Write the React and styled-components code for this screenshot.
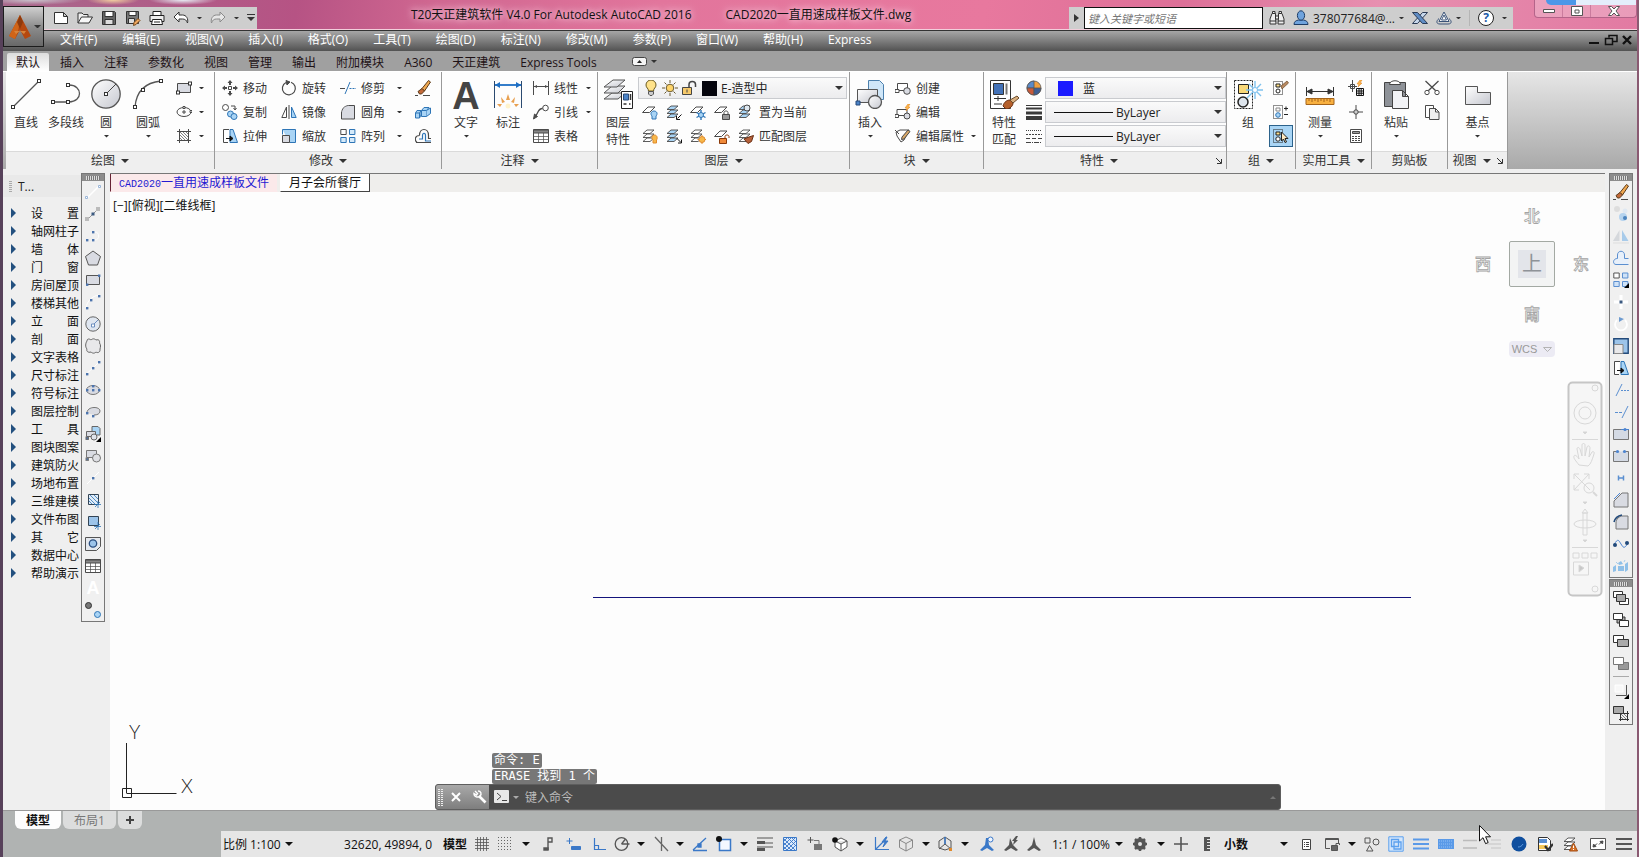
import styled, { createGlobalStyle } from 'styled-components';

const GlobalStyle = createGlobalStyle`
	* {
		box-sizing: border-box;
	}

	body {
		margin: 0;
		font-family: 'Open Sans', 'Noto Sans CJK SC', sans-serif;
		font-size: 12px;
		color: #222;
		background: #b0b3b2;
	}

	button,
	input,
	select {
		margin: 0;
		padding: 0;
		border: 0;
		background: none;
		font: inherit;
		color: inherit;
		appearance: none;
		outline: none;
	}

	button {
		white-space: nowrap;
	}
`;

const k = '#4a4a4a';
const b = '#2e75b6';
const lb = '#a9d4f5';
const g = '#d9dbe2';
const or = '#e08a2c';

const node = (x, y, s = 3) => (
	<rect key={`${x}-${y}`} x={x - s / 2} y={y - s / 2} width={s} height={s} fill="#fff" stroke="#333" />
);

const dot = (x, y) => (
	<rect key={`${x}-${y}`} x={x - 1} y={y - 1} width="2.4" height="2.4" fill="#4c74ad" />
);

const stack = (fill = '#fff') => (
	<g fill={fill} stroke={k} strokeWidth=".9">
		<path d="M1 13.5h7l4-3.5H5z" />
		<path d="M1 9.5h7L12 6H5z" />
		<path d="M1 5.5h7L12 2H5z" />
	</g>
);

const sheet = <path d="M.5 8.500h7L13 3H6z" fill="#fff" stroke={k} />;

// small icons are drawn on a 16 unit grid
const icons = {
	newFile: <path d="M1.500 2.500h9l4 4v7h-13zM10.500 2.500v4h4" fill="#fff" stroke="#333" />,
	open: (
		<g stroke="#333" strokeLinejoin="round">
			<path d="M1 13V3h4l1.500 1.500H11V7" fill="#eee" />
			<path d="M1 13l3.500-6H15.500l-3.500 6z" fill="#f7f7f7" />
		</g>
	),
	save: (
		<g stroke="#333">
			<path d="M1.500 1.500h12l1 1v12h-13z" fill="#666" />
			<path d="M4 1.500h8v5H4z" fill="#fff" />
			<path d="M4 9.500h8v5H4z" fill="#ddd" />
		</g>
	),
	saveAs: (
		<g stroke="#333">
			<path d="M1.500 1.500h12v12h-12z" fill="#777" />
			<path d="M4 1.500h7v4H4z" fill="#fff" />
			<path d="M3.500 8.500h6v5h-6z" fill="#ddd" />
			<path d="M8.500 15.500l.5-3 4-4 2 2-4 4z" fill="#f0a860" stroke="#7a4a1a" />
		</g>
	),
	print: (
		<g stroke="#222" fill="#fff">
			<path d="M4 5.500V1.500h8v4" />
			<path d="M1 5.500h14v6H1z" fill="#eee" />
			<path d="M3.500 9.500h9l1 5h-11z" />
			<path d="M5 12h6" />
		</g>
	),
	undo: <path d="M1 7l5-5v3h3.500c4 0 6 4 5 8-1-3-2.500-4-5-4H6v3z" fill="#fff" stroke="#333" />,
	redo: <path d="M15 7l-5-5v3H6.500c-4 0-6 4-5 8 1-3 2.500-4 5-4H10v3z" fill="#e6e6e6" stroke="#8a8a8a" />,
	binoculars: (
		<g stroke="#333" fill="#eee">
			<path d="M3 3.500h3.500v3L7 14H1V9zM13 3.500H9.500v3L9 14h6V9z" />
			<path d="M3.500 1.500h2.500v2H3.500zM10 1.500h2.500v2H10zM6.500 6h3v3h-3zM1 11h6M9 11h6" />
		</g>
	),
	user: (
		<g fill="#6fa3dd" stroke="#1d3c66">
			<path d="M1 14.500c0-3 2-4 4.500-4.500h5c2.500.5 4.500 1.500 4.500 4.500z" />
			<ellipse cx="8" cy="5.500" rx="3.600" ry="4.700" />
		</g>
	),
	exchange: (
		<g stroke="#2a3b55">
			<path d="M15.500 2.500h-5L.5 13.500h5z" fill="#c8d8ec" />
			<path d="M.5 2.500h5L15.500 13.500h-5z" fill="#5f8cc4" />
		</g>
	),
	a360: (
		<g fill="none" stroke="#3a5378">
			<path d="M8 2l5 9.500H3z" fill="#fff" />
			<path d="M8 5l2.500 5h-5z" />
			<path d="M3 8.500C0 11 0 14 4 14h8c4 0 4-3 1-5.500" />
		</g>
	),
	rect: (
		<g>
			<path d="M1.500 3.500h13v9h-13z" fill={g} stroke={k} />
			{node(14, 3.500)}
			{node(2, 12.500)}
		</g>
	),
	ellipse: (
		<g fill="none" stroke={k}>
			<ellipse cx="8" cy="8" rx="7" ry="4.500" />
			<path d="M8 6v4M6 8h4" />
			<path d="M14 6.500h2v2h-2zM7 2.500h2v2H7z" fill="#fff" />
		</g>
	),
	hatch: (
		<g stroke={k} fill="none">
			<path d="M3.500 1v14M12.500 1v14M1 3.500h14M1 12.500h14" />
			<path d="M4 10l2 2M4 7l5 5M4 4l8 8M7 4l5 5M10 4l2 2" strokeWidth=".7" />
		</g>
	),
	move: (
		<g fill={k}>
			<path d="M6.500 6.500h3v3h-3z" fill="#fff" stroke={k} />
			<path d="M8 0l2.500 3H9v2H7V3H5.500zM8 16l2.500-3H9v-2H7v2H5.500zM0 8l3-2.500V7h2v2H3v1.500zM16 8l-3-2.500V7h-2v2h2v1.500z" />
		</g>
	),
	rotate: (
		<g fill="none" stroke={k}>
			<path d="M5 2.500A6.500 6.500 0 1 0 10 2.200" strokeWidth="1.200" />
			<path d="M5 .5l4 1.500-3 3z" fill={k} />
		</g>
	),
	trim: (
		<g stroke={b} fill="none">
			<path d="M0 8.500h5" stroke={k} />
			<path d="M9.500 8.500H16" strokeDasharray="2 1" />
			<path d="M5 14L10 2" />
		</g>
	),
	eraser: (
		<g>
			<path d="M7 8.500L13.500.5l2 1.500-6 9z" fill="#f0a850" stroke="#5a3a1a" />
			<path d="M3 11.500l4-3 2.500 2.500-3 3H4.500z" fill="#c46a3a" stroke="#5a3a1a" />
			<path d="M0 15.500h3M8 15.500h7" stroke={k} />
		</g>
	),
	copy: (
		<g fill="#fff" stroke={k}>
			<circle cx="3.500" cy="3.500" r="3" />
			<path d="M9 2h4v3M11.500 4l1.500 2 1.500-2" fill="none" />
			<circle cx="8.500" cy="10" r="3" fill={lb} stroke={b} />
			<circle cx="12" cy="12.500" r="3" fill={lb} stroke={b} />
		</g>
	),
	mirror: (
		<g stroke={k}>
			<path d="M5.500 3v10.500H.8z" fill="#fff" />
			<path d="M8 1v14" />
			<path d="M10.500 3v10.500h4.700z" fill={lb} stroke={b} />
		</g>
	),
	fillet: (
		<g>
			<path d="M1.500 15V9c0-4 3-7.500 7-7.500h6V15z" fill={g} stroke={k} />
			<path d="M.5 8C1 4 4 1 8 .5" stroke="#fff" fill="none" />
		</g>
	),
	explode: (
		<g fill={lb} stroke={b}>
			<path d="M.5 9h4v5h-4zM.5 9L2 6.500h4L4.500 9M6 6.500V11L4.500 14" />
			<path d="M6.500 6.500h5v6h-5zM6.500 6.500L9 3.500h5l-2.500 3" />
			<path d="M11.500 6.500L15.500 4v5.500l-4 3" />
		</g>
	),
	stretch: (
		<g>
			<path d="M7 1.500H1.500v13H6" fill="#fff" stroke={k} />
			<path d="M8 1.500h3l4.500 13H8z" fill={lb} stroke={b} />
			<path d="M4 10.500h5M8 8l3 2.500L8 13z" stroke="#111" fill="#111" />
		</g>
	),
	scale: (
		<g>
			<path d="M1.500 1.500h13v13h-6" fill={lb} stroke={b} />
			<path d="M1.500 7.500h7v7h-7z" fill={g} stroke={k} />
			<path d="M1.500 1.500v5" stroke={b} />
		</g>
	),
	array: (
		<g fill="#fff" stroke={b}>
			<path d="M.8 1.500h5.400v5H.8z" stroke={k} />
			<path d="M9.500 1.500h5.400v5H9.500zM.8 9.500h5.400v5H.8zM9.500 9.500h5.400v5H9.500z" fill="#d5eafa" />
		</g>
	),
	offset: (
		<g fill="none" stroke={k} strokeWidth="1.200">
			<path d="M1 14.500h15M4.500 7.500C-.5 7.500-.5 12.500 2 14.500M4.500 7.500C4.500-.5 13.500-.5 13.500 7.500v3H16" />
			<path d="M4 11h3.500V7.500c0-3 3-3 3 0V13H16" stroke={b} />
		</g>
	),
	linear: (
		<g stroke={k} fill={k}>
			<path d="M.5 1v14M15.500 1v14M1 6.500h14" />
			<path d="M1 6.500l3-1.500v3zM15 6.500l-3-1.500v3z" stroke="none" />
		</g>
	),
	leader: (
		<g stroke={k} fill="none">
			<circle cx="12.500" cy="4" r="2.800" />
			<path d="M9.500 4.500c-5 0-4 5-7.500 8" strokeWidth="1.300" />
			<path d="M.5 15l1-5 3 2.500z" fill={k} />
		</g>
	),
	table: (
		<g stroke={k} fill="none">
			<path d="M.5 1.500h15v13H.5z" fill="#fff" />
			<path d="M.5 2h15v3H.5z" fill="#888" />
			<path d="M.5 8.500h15M.5 11.500h15M5.500 5v9.500M10.500 5v9.500" strokeWidth=".7" />
		</g>
	),
	bulb: (
		<g stroke="#6a5a20">
			<path d="M5.500 11C5.500 8 3 8 3 5a5 5 0 0 1 10 0c0 3-2.500 3-2.500 6z" fill="#ffe28a" />
			<path d="M5.500 11.500h5V14l-1.500 1.500H7L5.500 14z" fill="#ccc" stroke="#555" />
		</g>
	),
	sun: (
		<g stroke="#6a5a30">
			<path d="M8 0v3M8 13v3M0 8h3M13 8h3M2.500 2.500l2 2M11.500 11.500l2 2M2.500 13.500l2-2M11.500 4.500l2-2" />
			<circle cx="8" cy="8" r="3.800" fill="#ffd56a" />
		</g>
	),
	unlock: (
		<g stroke="#444">
			<path d="M1.500 7.500h9v7h-9z" fill="#f6c96a" />
			<path d="M8 7V4.500c0-4 6.500-4 6.500 0V7" fill="none" strokeWidth="1.500" />
			<path d="M6 9.500v3" />
		</g>
	),
	layOff: (
		<g>
			{sheet}
			<path d="M10 12C8 10 9 7 12 7s4 3 2 5v3h-4z" fill={lb} stroke={b} />
		</g>
	),
	layIso: (
		<g>
			{stack(lb)}
			<path d="M15.500 10.500L11.500 14.500M10.500 12v3.500H14" stroke="#111" fill="none" />
		</g>
	),
	layFreeze: (
		<g>
			{sheet}
			<path d="M11 6v10M6.500 8.500l9 5M6.500 13.500l9-5" stroke={b} strokeWidth="1.400" />
			<circle cx="11" cy="11" r="2.500" fill={lb} stroke={b} />
		</g>
	),
	layLock: (
		<g>
			{sheet}
			<path d="M8.500 10.500h7v5h-7z" fill="#999" stroke={k} />
			<path d="M10 10V8.500c0-2 4-2 4 0V10" fill="none" stroke={k} />
		</g>
	),
	layCurrent: (
		<g>
			{stack(lb)}
			<circle cx="9" cy="4" r="3" fill="#dfe8f0" stroke={k} />
		</g>
	),
	layOn: (
		<g>
			{stack()}
			<path d="M11 12C9 10 10 7 12.500 7S16 10 14.500 12v3H11z" fill="#f7b84a" stroke={or} />
		</g>
	),
	layUniso: (
		<g>
			{stack(lb)}
			<path d="M11 10.500l4 4M15.500 11.500V15H12" stroke="#111" fill="none" />
		</g>
	),
	layThaw: (
		<g>
			{stack()}
			<circle cx="12" cy="11.500" r="3" fill="#f7b84a" stroke={or} />
			<path d="M12 7v9M7.500 11.500H16" stroke={or} strokeDasharray="1.500 6" />
		</g>
	),
	layUnlock: (
		<g>
			{sheet}
			<path d="M5.500 10.500h7v5h-7z" fill="#f08a3a" stroke="#8a3a0a" />
			<path d="M11 10V8.500c0-2 4-2 4 0V10" fill="none" stroke="#8a3a0a" />
		</g>
	),
	layMatch: (
		<g>
			{stack()}
			<path d="M6 11l5-2 4.500-1.500-2 6-3.500 2z" fill="#b5603a" stroke="#6a2f12" />
		</g>
	),
	block: (
		<g stroke={k}>
			<path d="M2.500 3.500h10v7h-10z" fill="#fff" />
			<path d="M0 9.500h4v3H0z" fill="#fff" />
			<circle cx="12" cy="11" r="3.300" fill={g} />
		</g>
	),
	blockEdit: (
		<g stroke={k}>
			<path d="M2 5.500h10v6H2z" fill="#fff" />
			<path d="M0 10.500h3.500v3H0z" fill="#fff" />
			<circle cx="12" cy="12" r="3" fill={g} />
			<path d="M13 0l-3 4h2l-1 3 4-4h-2l2-3z" fill="#ffb84a" stroke={or} strokeWidth=".6" />
		</g>
	),
	attr: (
		<g stroke={k}>
			<path d="M1 4l4-2h9l-5 10-3 2-4-6z" fill="#fff" />
			<path d="M0 2l4 4" />
			<path d="M7 9l6-7 2 1.500-6 7.500-2.500.5z" fill="#d9a868" />
		</g>
	),
	wheel: (
		<g stroke="#555" strokeWidth=".8">
			<circle cx="8" cy="8" r="7" fill="#f0a040" />
			<path d="M8 8V1a7 7 0 0 0-7 7z" fill="#5a8ac8" />
			<path d="M8 8H1a7 7 0 0 0 7 7z" fill="#c85a3a" />
			<path d="M8 8h7a7 7 0 0 1-7 7z" fill="#3f5f94" />
		</g>
	),
	weights: (
		<g stroke="#3a3a3a">
			<path d="M0 1.500h16" />
			<path d="M0 4.500h16" strokeWidth="2" />
			<path d="M0 9h16" strokeWidth="3" />
			<path d="M0 14h16" strokeWidth="4" />
		</g>
	),
	dashes: (
		<g stroke="#444">
			<path d="M0 2.500h16" strokeDasharray="1 1" />
			<path d="M0 6.500h16" strokeDasharray="2 1" />
			<path d="M0 10.500h16" strokeDasharray="4 2" />
			<path d="M0 14.500h16" strokeDasharray="5 1 1 1" />
		</g>
	),
	ungroup: (
		<g fill="none" stroke="#222">
			<path d="M.5 1.500h9v13h-9z" strokeDasharray="1 1" />
			<path d="M3 4h4v3H3z" fill="#ffe08a" />
			<circle cx="5" cy="11" r="2" fill="#fff" />
			<path d="M8 6l6-5 1.500 2L9 9z" fill="#b98a62" stroke="#6a4a2a" strokeWidth=".7" />
		</g>
	),
	groupEdit: (
		<g fill="none" stroke="#222">
			<path d="M.5 1.500h9v13h-9z" strokeDasharray="1 1" />
			<path d="M3 4h4v3H3z" stroke="#888" />
			<circle cx="5" cy="11" r="2.300" fill={lb} stroke={b} />
			<path d="M11 4.500h4M13 2.500v4M11 10.500h4" />
		</g>
	),
	groupSelect: (
		<g fill="none" stroke="#222">
			<path d="M.5 1.500h9v13h-9z" strokeDasharray="1 1" />
			<path d="M3 4h4v3H3z" fill="#ffe08a" />
			<circle cx="5" cy="11" r="2.200" fill="#fff" />
			<path d="M8.500 4v9l2-2 1.500 3.500 1.500-.5-1.500-3.500H15z" fill="#ffe9c0" />
		</g>
	),
	quickCalc: (
		<g stroke={k} fill="none">
			<path d="M4.500 0v12M0 6.500h9M2.500 4.500h4v4h-4z" />
			<path d="M12 0l-3 4h2l-1 3 4-4h-2l2-3z" fill="#ffb84a" stroke={or} strokeWidth=".6" />
			<path d="M8.500 8.500h7v7h-7zM8.500 11h7M8.500 13.200h7M11 8.500v7M13.200 8.500v7" stroke="#111" />
		</g>
	),
	point: (
		<g stroke={k} fill="none">
			<path d="M8 1v14M1 8h14" />
			<circle cx="8" cy="8" r="2.200" fill="#ccc" />
		</g>
	),
	calc: (
		<g stroke={k} fill="none">
			<path d="M2.500 1.500h11v13h-11z" fill="#fff" />
			<path d="M4.500 3.500h7v2h-7z" fill="#999" />
			<path d="M4 8.500h8M4 10.500h8M4 12.500h8" strokeDasharray="2 1" />
		</g>
	),
	cut: (
		<g stroke={k} fill="#fff">
			<path d="M1.500 1L12 11M14.500 1L4 11" strokeWidth="1.300" />
			<circle cx="3" cy="12.500" r="2.200" />
			<circle cx="13" cy="12.500" r="2.200" />
		</g>
	),
	pages: (
		<g stroke={k} fill="#fff">
			<path d="M1.500 1.500h8v12h-8z" />
			<path d="M5.500 4.500h6l3.500 3.500v7.500H5.500zM11.500 4.500V8H15" fill="#eee" />
		</g>
	),

	// drawing toolbar
	tLine: (
		<g>
			<path d="M2 14L14 2" stroke="#fff" strokeWidth="1.500" />
			<path d="M.5 12.500h2v2h-2zM13.500 1.500h2v2h-2z" fill="#fff" stroke="#9bb6d8" />
		</g>
	),
	tXline: (
		<g>
			<path d="M1 15L15 1" stroke="#999" />
			<path d="M0 11h4v4H0zM11 1h4v4h-4z" fill="#bbb" />
			<path d="M6.500 6.500h3v3h-3z" fill="#3c5a80" />
		</g>
	),
	tPline: <g>{[dot(2, 12), dot(8, 12), dot(8, 4)]}<path d="M10 4c5 0 5 8 0 8" stroke="#fff" fill="none" /></g>,
	tPolygon: <path d="M8 1l7.500 5.500L12.500 15h-9L.5 6.500z" fill={g} stroke="#555" />,
	tRect: <g><path d="M1.500 3.500h13v9h-13z" fill={g} stroke="#555" />{[dot(14, 3.500), dot(2, 12.500)]}</g>,
	tArc: <g><path d="M1 14C2 7 7 2 14 1" stroke="#fff" fill="none" />{[dot(2, 14), dot(6, 6), dot(14, 2)]}</g>,
	tCircle: (
		<g stroke="#666">
			<circle cx="8" cy="8" r="7.200" fill="#dfe6f0" />
			<path d="M6.500 8h3v3h-3zM9 8l4-4" fill="#fff" stroke="#6d8fc0" />
		</g>
	),
	tCloud: <path d="M2 3c0-3 3-2 4-1 2-2 4-1 5 0 3-1 4 1 3.500 3 1.500 2 1 4 .5 6 .5 4-3 4-4 3-2 2-4 1-5 0-3 1-5-1-4-3C0 9 .5 5 2 3z" fill="#e8e8ea" stroke="#666" />,
	tSpline: <g><path d="M1 14C4 12 10 6 15 1" stroke="#fff" fill="none" />{[dot(2, 14), dot(8, 8), dot(14, 2)]}</g>,
	tEllipse: <g><ellipse cx="8" cy="8" rx="6.500" ry="4.500" fill={g} stroke="#777" />{[dot(8, 4), dot(2, 8), dot(14, 8), dot(8, 8)]}</g>,
	tEllArc: <g><path d="M2 9C2 2 15 2 15 7c0 3-3 4-6 4" fill={g} stroke="#777" />{[dot(2, 9), dot(8, 12)]}</g>,
	tInsert: (
		<g stroke="#666">
			<path d="M7 .5h6l2 2V9H7z" fill={lb} />
			<path d="M1.500 5.500h9v5h-9z" fill={g} />
			<circle cx="9" cy="11" r="3" fill="#dfe3ea" />
			<path d="M16 11v5h-5z" fill="#000" stroke="none" />
			{dot(2, 12)}
		</g>
	),
	tBlock: (
		<g stroke="#777">
			<path d="M1.500 2.500h10v7h-10z" fill={g} />
			<circle cx="11.500" cy="10" r="4" fill="#dfe0e4" />
			{dot(2, 11)}
		</g>
	),
	tPoint: <g><path d="M2 14L14 2" stroke="#fff" />{dot(8, 8)}</g>,
	tHatch: (
		<g stroke={b} fill="none">
			<path d="M3.500 2.500h10v10h-10z" fill="#e0ecf8" stroke="#345" />
			<path d="M4 6l6 6M4 9l3 3M5 3l8 8M9 3l4 4" strokeWidth=".8" />
			<path d="M13 9v7M9 12.500h7M10 15l5-5" strokeWidth=".8" />
		</g>
	),
	tGradient: (
		<g stroke={b} fill="none">
			<path d="M3.500 2.500h10v9h-10z" fill="#9cc4ea" stroke="#345" />
			<path d="M13 8v8M9 12.500h7M10 15l5-5" strokeWidth=".8" />
		</g>
	),
	tRegion: (
		<g stroke="#555">
			<path d="M.5 1.500h15v9l-4 4H.5z" fill="#e4e8ee" />
			<circle cx="8" cy="7.500" r="3.700" fill="#9cc4ea" stroke="#2c4f80" strokeWidth="1.300" />
		</g>
	),
	tDots: (
		<g stroke="#333">
			<circle cx="3.500" cy="3.500" r="3" fill="#777" />
			<circle cx="12.500" cy="12.500" r="3" fill={lb} stroke={b} />
		</g>
	),

	// modify toolbar
	rCopy: (
		<g>
			<circle cx="4" cy="3" r="3" fill="#ddd" />
			<circle cx="12" cy="5" r="2.500" fill="#dfe8f2" />
			<circle cx="10" cy="11" r="4" fill="#b5d3ee" />
			<circle cx="12" cy="12" r="2" fill="#4c84bd" />
		</g>
	),
	rMirror: <g><path d="M6.500 2v11H0z" fill="#d5d8dc" /><path d="M9 2v11h6.500z" fill="#a8cbea" /><path d="M0 15h16" stroke="#ddd" /></g>,
	rOffset: <path d="M15.500 14.500H3c-3.500 0-3.500-6 1.500-6V5c0-5 7-5 7 0v3.500h4" fill="#e8f0fa" stroke="#5b8fd0" />,
	rArray: (
		<g stroke="#5b8fd0" fill="#cfe2f7">
			<path d="M.8 1h5.400v5H.8z" fill="#fff" stroke="#555" />
			<path d="M9.500 1h5.400v5H9.500zM.8 9.500h5.400v5H.8zM9.500 9.500h5.400v5H9.500z" />
			<path d="M16 11v5h-5z" fill="#000" stroke="none" />
		</g>
	),
	rMove: <g><path d="M8 1v14M1 8h14" stroke="#fff" strokeWidth="3" /><path d="M6.500 6.500h3v3h-3z" fill="#3c5a80" /></g>,
	rRotate: <g><path d="M4 4a6 6 0 1 0 8 0" stroke="#fff" fill="none" strokeWidth="1.800" /><path d="M6 1l5 2-5 3z" fill="#6d9bd0" /></g>,
	rScale: <g><path d="M.8 .8h14.400v14.400H.8z" fill="#9cc4ea" stroke="#234a7a" strokeWidth="1.400" /><path d="M1 6.500h9v9H1z" fill="#e8e8ea" stroke="#888" /></g>,
	rTrim: <g stroke="#5b8fd0"><path d="M3 14L9 2" /><path d="M8 8.500h8" strokeDasharray="2 1" /></g>,
	rExtend: <g stroke="#5b8fd0"><path d="M9 14l6-12" /><path d="M2 8.500h8" strokeDasharray="3 1" /></g>,
	rBreakAt: <g><path d="M.5 3.500h15v10H.5z" fill="#d4dae4" stroke="#777" /><circle cx="12" cy="3.500" r="1.600" fill="#4c84d0" /><path d="M8 3.500h8" stroke="#4c84d0" /></g>,
	rBreak: <g><path d="M3 3.500H.5v10h15v-10H13" fill="#d4dae4" stroke="#777" /><circle cx="4.500" cy="3.500" r="1.600" fill="#4c84d0" /><circle cx="11.500" cy="3.500" r="1.600" fill="#4c84d0" /></g>,
	rJoin: <path d="M5.500 5.500v5M10.500 5.500v5M5 8h6" stroke="#5b8fd0" strokeWidth="1.500" />,
	rChamfer: <g><path d="M1 15V9l8-8h6v14z" fill={g} stroke="#777" /><path d="M1 7l6-6" stroke="#4c84d0" /></g>,
	rFillet: <g><path d="M3 15V9c0-4 3-7 7-7h5v13z" fill={g} stroke="#777" /><path d="M1 8c1-4 3-6 8-7" stroke="#234a7a" fill="none" strokeWidth="1.600" /></g>,
	rBlend: <g><path d="M1 9c4-8 5-4 7-1s3 6 7-1" fill="none" stroke="#4c84d0" /><circle cx="2" cy="9" r="2" fill="#234a7a" /><circle cx="14" cy="7" r="2" fill="#234a7a" /></g>,
	rExplode: <g fill="#8fc0e8"><path d="M0 9l3-2v6l-3 1zM5 5l3-2 2 3-4 1zM5 8h6v5H5zM12 6l3-2v8l-3 2z" /><path d="M3 4l2 2M12 2l-1 2" stroke="#a5cdec" /></g>,

	// draw order toolbar
	oFront: <g stroke="#333" fill="#fff"><path d="M.5 1.500h9v6h-9zM6.500 8.500h9v6h-9z" /><path d="M3.500 4.500h9v7h-9z" fill="#aaa" /></g>,
	oBack: <g stroke="#333" fill="#fff"><path d="M4 5h8v6H4z" fill="#aaa" /><path d="M.5 1.500h9v6h-9zM6.500 8.500h9v6h-9z" /></g>,
	oAbove: <g stroke="#333" fill="#fff"><path d="M.5 1.500h10v7H.5z" /><path d="M4.500 5.500h11v7h-11z" fill="#aaa" /></g>,
	oUnder: <g stroke="#777" fill="#fff"><path d="M5.500 6.500h10v7h-10z" fill="#999" /><path d="M.5 1.500h10v7H.5z" /></g>,
	oText: <g stroke="#555" fill="none"><path d="M13.500 2v10.500H3" /><path d="M2 2h8v7H2z" stroke="#fff" fill="#f8f8f8" /><path d="M16 11v5h-5z" fill="#000" stroke="none" /></g>,
	oHatch: <g stroke="#333" fill="#fff"><path d="M7.500 6v10M14.500 6v10M6 8.500h10M6 14.500h10" /><path d="M8 12l2 2M8 9l5 5M11 9l3 3" strokeWidth=".6" /><path d="M.5 1.500h10v7H.5z" fill="#aaa" /></g>,

	// status bar
	sGrid: <path d="M3.500 1v14M6.500 1v14M9.500 1v14M12.500 1v14M1 3.500h14M1 6.500h14M1 9.500h14M1 12.500h14" stroke="#555" strokeWidth=".8" />,
	sSnap: <path d="M1 1.500h14M1 4.500h14M1 7.500h14M1 10.500h14M1 13.500h14" stroke="#666" strokeDasharray="1 2" />,
	sInfer: <g stroke="#555" fill="none" strokeWidth="1.400"><path d="M8 14V2h4v4H8" /><path d="M4 12h4v2H4z" fill="#555" /></g>,
	sDyn: <g stroke="#3a78c8" fill="#3a78c8"><path d="M4.500 2v6M1.500 5h6" /><path d="M6.500 10.500h9v3h-9z" /></g>,
	sOrtho: <path d="M3.500 2v11.500H15M3.500 9.500h4v4" stroke="#3a78c8" fill="none" strokeWidth="1.200" />,
	sPolar: <g stroke="#555" fill="none" strokeWidth="1.300"><circle cx="7.500" cy="8" r="6.300" /><path d="M7.500 8h8M7.500 8l4-5" /></g>,
	sIso: <g stroke="#666"><path d="M2 1l13 14M8.500 1v14" strokeWidth="1.300" /></g>,
	sTrack: <g stroke="#3a78c8" fill="none" strokeWidth="1.300"><path d="M1 14.500h14M1 14L14 2" /><path d="M6 8h3v3H6z" fill="#3a78c8" /></g>,
	sOsnap: <g><path d="M3.500 3.500h11v11h-11z" fill="#f4f8ff" stroke="#3a78c8" strokeWidth="1.500" /><circle cx="3" cy="3" r="3" fill="#111" /></g>,
	sWeight: <g stroke="#555"><path d="M0 2h16M7 7h9M0 11h16" strokeWidth="1.200" /><path d="M0 6.500h8M0 13.500h8" strokeWidth="3" /></g>,
	sTransp: (
		<g>
			<path d="M1.500 1.500h13v13h-13z" fill="#dceafc" stroke="#3a78c8" />
			<path d="M2 5l3-3M2 9l7-7M2 13l11-11M5 14l9-9M9 14l5-5M2 11l3 3M2 7l7 7M2 3l11 11M6 2l8 8M10 2l4 4" stroke="#3a78c8" strokeWidth=".9" />
		</g>
	),
	sCycle: <g><path d="M3.500 1v6M.5 4h6" stroke="#555" /><path d="M7 4.500h5V8" fill="none" stroke="#777" /><path d="M7 8h8v6H7z" fill="#777" /></g>,
	sOsnap3: <g stroke="#555" fill="#fff"><path d="M9 2l6 3v6l-6 4-6-4V5zM3 5l6 3 6-3M9 8v7" /><circle cx="3" cy="4" r="2.800" fill="#111" stroke="none" /></g>,
	sUcs: <g stroke="#3a78c8" fill="none"><path d="M2.500 1v12.500H16M3 13L11 5" strokeWidth="1.200" /><path d="M13 1L9 6h3l-2 5 5-6h-3l2-4z" fill="#3a78c8" /></g>,
	sBox: <path d="M8 1l6.500 3v7.500L8 15l-6.500-3.500V4zM1.500 4L8 7.500 14.500 4M8 7.500V15" stroke="#888" fill="none" />,
	sGizmo: <g stroke="#555" fill="none"><path d="M8 1L2 5v7l6 2 6-2V5zM8 1v7l-6 5M8 8l6 5" /><path d="M12 12h3v3h-3z" fill={or} stroke="none" /><path d="M8 1v7" stroke="#3a78c8" strokeWidth="1.500" /></g>,
	sAnnoVis: <g fill="#3a78c8"><path d="M7 2h2l1 7 5 5-2 1-5-3-5 3-2-1 5-5z" /><circle cx="11.500" cy="3.500" r="2.500" fill="#eef5ff" stroke="#3a78c8" /></g>,
	sAnnoAuto: <g fill="#555"><path d="M7 2l3 7 5 5-2 1-5-3-5 3-2-1 5-5z" /><path d="M13 0L9 5h2l-1 4 5-5h-2l2-4z" /></g>,
	sAnno: <path d="M8 1l2 8 5 5-2 1-5-3-5 3-2-1 5-5z" fill="#555" />,
	sGear: (
		<g stroke="#555">
			<circle cx="8" cy="8" r="4" strokeWidth="4" />
			<path d="M8 1v2M8 13v2M1 8h2M13 8h2M3 3l1.500 1.500M11.500 11.500L13 13M3 13l1.500-1.500M11.500 4.500L13 3" strokeWidth="2.500" />
		</g>
	),
	sPlus: <path d="M8 1v14M1 8h14" stroke="#555" strokeWidth="1.600" />,
	sRuler: <g><path d="M5 1h6v14H5z" fill="#555" /><path d="M8 3.500h3M8 6.500h3M8 9.500h3M8 12.500h3" stroke="#e6e6e6" /></g>,
	sProps: <g stroke="#444" fill="none"><path d="M4.500 3.500h8v10h-8z" fill="#fff" /><path d="M6 6.500h1M8 6.500h3M6 8.500h1M8 8.500h3M6 10.500h1M8 10.500h3" /></g>,
	sLockUi: <g stroke="#555" fill="none"><path d="M6 12.500H1.500v-10h13V7M1.500 3.500h13" /><path d="M7.500 9.500h6v5h-6z" fill="#666" /><path d="M12 9V7.500h3.500V9" /></g>,
	sIsolate: <g stroke="#555" fill="none"><path d="M1 2h5v5H1zM5.500 9.500L9 15H2.500z" /><circle cx="12" cy="6" r="3" /></g>,
	sHardware: <g stroke="#5ba0ee" fill="#d4e6fb"><path d="M.8 .8h14.400v14.400H.8z" /><path d="M3.500 3.500h7v7h-7zM6 6h7v7H6z" strokeWidth="1.300" /></g>,
	sLines: <path d="M0 3.500h16M0 8h16M0 12.500h16" stroke="#5b9ae8" strokeWidth="1.800" />,
	sFill: <g><path d="M0 3h16v10H0z" fill="#5a9ae8" /><path d="M1 5h14M1 8h14M1 11h14" stroke="#93c0f5" strokeDasharray="1 1" /></g>,
	sGrayLines: <path d="M1 4.500h14M1 12h14" stroke="#bbb" strokeWidth="1.500" />,
	sGrayLines2: <path d="M5 4h10M1 8h14M5 12h10" stroke="#c4c4c4" strokeWidth="1.200" />,
	sBall: <g><circle cx="8" cy="8" r="7.500" fill="#0f4f9f" /><path d="M7 11c2 0 4-1 5-3" stroke="#5f9de0" fill="none" /></g>,
	sDwg: <g stroke="#333"><path d="M1.500 1.500h9l3 3v10h-12z" fill="#fff" /><path d="M2 3h8v4H2z" fill="#5b8fd0" stroke="none" /><path d="M2 9h9v4H2z" fill="#f7c95a" stroke="none" /><path d="M8 10l3 4 5-6" fill="none" strokeWidth="2.200" /></g>,
	sLayerWarn: <g>{stack()}<path d="M10.500 7l4 8h-8z" fill="#d8742a" stroke="#a34a10" /><path d="M10.500 9.500v2.500M10.500 13v1" stroke="#fff" /></g>,
	sClean: <g stroke="#555" fill="#fff"><path d="M.5 2.500h15v11H.5z" /><path d="M6 10.500l-3 .5.500-3zM10 5.500l3-.5-.5 3z" fill="#333" /><path d="M4 10.500l3-3M12 5.500l-3 3" stroke="#333" /></g>,
	sMenu: <path d="M0 3h16M0 8h16M0 13h16" stroke="#555" strokeWidth="1.800" />,
};

// large icons are drawn on a 30 unit grid
const bigIcons = {
	line: <g><path d="M3 27L27 3" stroke="#555" strokeWidth="1.300" />{[node(2, 28), node(28, 2)]}</g>,
	pline: <g><path d="M3 23h15c14 0 14-17 0-17" stroke="#555" fill="none" strokeWidth="1.300" />{[node(2, 23), node(17, 23), node(17, 6)]}</g>,
	circle: <g><circle cx="15" cy="15" r="14.200" fill="url(#shade)" stroke="#555" strokeWidth="1.300" /><path d="M15 15L25 5" stroke="#444" />{node(15, 15)}</g>,
	arc: <g><path d="M2 28C3 16 8 4 28 2" stroke="#555" fill="none" strokeWidth="1.300" />{[node(2, 28), node(10, 11), node(28, 2)]}</g>,
	dim: (
		<g>
			<path d="M1.500 2v27M28.500 2v27" stroke="#2b4a70" />
			<path d="M2 6h26" stroke="#1e6fc4" strokeWidth="1.800" />
			<path d="M2 6l5-3v6zM28 6l-5-3v6z" fill="#1e6fc4" />
			<path d="M15 15l2 6h-4zM8 18l4 5-3 1zM22 18l-4 5 3 1zM4 25l5 0-2 3zM26 25l-5 0 2 3z" fill="#e8a050" />
			<circle cx="15" cy="27" r="2.500" fill="#fff3cc" />
		</g>
	),
	layerProps: (
		<g>
			<g fill="url(#shade)" stroke="#555">
				<path d="M1 20h14l7-6H9z" />
				<path d="M1 14h14l7-7H9z" />
				<path d="M1 8h13l8-7H10z" />
			</g>
			<path d="M18.500 12.500h11v17h-11z" fill="#fff" stroke="#222" />
			<path d="M20.500 15h5v6h-5z" fill="#4c84c8" stroke="#2a4a78" />
			<path d="M20.500 25h3M26 25h1.500M27.500 15v6" stroke="#333" strokeWidth="1.500" />
		</g>
	),
	insert: (
		<g stroke="#555">
			<path d="M13.500 1.500h11l4 4v15h-15z" fill="#cfe6f8" stroke="#4c80ad" />
			<path d="M2.500 10.500h20v13h-20z" fill="url(#shade)" />
			<circle cx="20" cy="23" r="6.500" fill="url(#shade)" strokeWidth="1.300" />
			<path d="M1 22h4v4H1z" fill="#4c84c8" stroke="#24487a" />
		</g>
	),
	matchProps: (
		<g stroke="#333">
			<path d="M1.500 1.500h20v28h-20z" fill="#fff" />
			<path d="M4.500 4.500h10v11h-10z" fill="#4372b8" />
			<path d="M17.500 4.500v11" stroke="#777" strokeWidth="2" />
			<path d="M5 19.500h12M9 17v5M5 25h8" />
			<path d="M14 27c1-4 4-6 7-6l3 3c0 3-3 6-7 6z" fill="#b5602c" stroke="#6a2f12" />
			<path d="M21 21l7-4 2 2-6 5z" fill="#d9b080" stroke="#6a4a2a" />
		</g>
	),
	group: (
		<g fill="none" stroke="#222">
			<path d="M1.500 1.500h18v28h-18z" strokeDasharray="2 1" />
			<path d="M5.500 5.500h10v9h-10z" fill="#f8d878" />
			<circle cx="10" cy="23" r="5" fill="#dde4ec" strokeWidth="1.500" />
			<path d="M22 2v18M13 11h17M16 5l12 12M28 5L14 19" stroke="#7fc2ee" strokeWidth="1.400" />
			<circle cx="22" cy="11" r="2.500" fill="#fff" stroke="#7fc2ee" />
		</g>
	),
	measure: (
		<g stroke="#333">
			<path d="M1.500 8v9M28.500 8v9M2 12.500h26" />
			<path d="M2 12.500l5-2.500v5zM28 12.500l-5-2.500v5z" fill="#333" />
			<path d="M1 19.500h28v6H1z" fill="#f8b040" stroke="#a5641a" />
			<path d="M4 20v2M7 20v3M10 20v2M13 20v3M16 20v2M19 20v3M22 20v2M25 20v3" stroke="#a5641a" />
		</g>
	),
	paste: (
		<g stroke="#444">
			<path d="M3.500 3.500h21v24h-21z" fill="#8e9298" />
			<path d="M8.500 5.500c0-5 11-5 11 0z" fill="#fff" />
			<path d="M11.500 11.500h10l6 6v12h-16zM21.500 11.500v6h6" fill="#f2f3f6" />
		</g>
	),
	base: <path d="M2.500 7.500h12v6h13v12h-25z" fill="url(#shade)" stroke="#555" />,
};

const IconSvg = styled.svg`
	display: block;
	flex: none;
	width: ${props => props.$size}px;
	height: ${props => props.$size}px;
	fill: none;
`;

const Icon = ({ name }) => (
	<IconSvg $size={16} viewBox="0 0 16 16" aria-hidden="true">{icons[name]}</IconSvg>
);

const BigIcon = ({ name }) => (
	<IconSvg $size={30} viewBox="0 0 30 30" aria-hidden="true">{bigIcons[name]}</IconSvg>
);

const CaretSvg = styled.svg`
	display: block;
	flex: none;
	width: ${props => props.$size}px;
	height: ${props => props.$size / 2}px;
	fill: ${props => props.$color || '#333'};
`;

const Caret = ({ size = 6, color }) => (
	<CaretSvg $size={size} $color={color} viewBox="0 0 8 4" aria-hidden="true">
		<path d="M0 0h8L4 4z" />
	</CaretSvg>
);

const Window = styled.div`
	display: flex;
	flex-direction: column;
	min-height: 100vh;
	border-left: 3px solid #57415a;
	border-right: 2px solid #8a5a72;
	overflow: hidden;
	background: #b0b3b2;
`;

const Header = styled.header`
	display: grid;
	grid-template-columns: 41px 1fr;
	grid-template-rows: 30px 21px;
`;

const TitleBar = styled.div`
	grid-area: 1 / 1 / 2 / 3;
	display: flex;
	align-items: flex-end;
	padding-left: 41px;
	border-bottom: 1px solid #f3cfdc;
	background:
		radial-gradient(ellipse 50px 5px at 30px 0, #c9c3cc, transparent),
		radial-gradient(ellipse 26px 5px at 110px 0, #f2cfa0, transparent),
		radial-gradient(ellipse 34px 5px at 180px 0, #e8eef5, transparent),
		linear-gradient(100deg, #a8688c 0, #b65384 18%, #cf6690 26%, #e2759c 40%, #e8789e 60%, #dd7098 72%, #e790b0 84%, #e27aa2 100%);
`;

const AppButton = styled.button`
	grid-area: 1 / 1 / 3 / 2;
	z-index: 1;
	display: flex;
	align-items: center;
	justify-content: space-between;
	margin: 6px 0 4px;
	padding: 0 2px 0 4px;
	border: 1px solid #1c1c1c;
	background: linear-gradient(#cfcfcf, #8e8e8e 50%, #686868);
`;

const QuickBar = styled.div`
	display: flex;
	align-items: center;
	gap: 8px;
	width: 213px;
	height: 22px;
	padding-left: 9px;
	background: #cecece;
`;

const PlainButton = styled.button`
	display: flex;
	align-items: center;
	gap: 4px;
`;

const Title = styled.h1`
	display: flex;
	flex: 1;
	gap: 34px;
	margin: 0;
	padding-left: 154px;
	font-size: 12px;
	font-weight: 400;
	line-height: 28px;
	white-space: nowrap;
	color: #111;
	text-shadow: 0 0 6px #ffd8e6, 0 0 10px #ffc4d8;
`;

const InfoCenter = styled.div`
	display: flex;
	align-items: center;
	gap: 8px;
	width: 444px;
	height: 22px;
	padding-right: 6px;
	background: #cecece;
`;

const SearchToggle = styled.button`
	display: flex;
	justify-content: center;
	width: 15px;
	margin-right: -8px;
`;

const SearchInput = styled.input`
	width: 179px;
	height: 22px;
	margin-right: -2px;
	padding: 0 3px;
	border: 1px solid #111;
	background: #fff;
	font-size: 11px;
	font-style: italic;

	&::placeholder {
		color: #777;
	}
`;

const InfoDivider = styled.span`
	width: 1px;
	height: 16px;
	margin-left: auto;
	background: #b5b5b5;
`;

const HelpBadge = styled.span`
	width: 16px;
	height: 16px;
	border: 1px solid #222;
	border-radius: 50%;
	background: #fff;
	font-weight: 700;
	line-height: 14px;
	text-align: center;
	color: #2259a8;
`;

const WindowButtons = styled.div`
	position: relative;
	display: flex;
	align-self: flex-start;
	height: 18px;
	margin-left: 21px;
	border: 1px solid #b5648a;
	border-top: 0;
	border-radius: 0 0 4px 4px;
	background: rgba(255, 255, 255, .25);
`;

const WindowButton = styled.button`
	display: flex;
	align-items: center;
	justify-content: center;
	width: ${props => props.$wide ? 45 : 28}px;
	padding-top: 4px;
	border-right: 1px solid rgba(181, 100, 138, .6);

	&:last-of-type {
		border-right: 0;
	}
`;

const CaptureStrip = styled.span`
	position: absolute;
	top: 0;
	right: 0;
	width: 90px;
	height: 5px;
	border-left: 30px solid #4b97e8;
	border-bottom-left-radius: 5px;
	background: #e4eefb;
`;

const MenuBar = styled.nav`
	grid-area: 2 / 1 / 3 / 3;
	display: flex;
	align-items: center;
	gap: 25px;
	padding: 0 5px 2px 57px;
	border-top: 1px solid #333;
	background: linear-gradient(#a6a6a6, #7d7d7d 50%, #525252);
	line-height: 18px;
	white-space: nowrap;
	color: #fff;
`;

const DocButtons = styled.div`
	display: flex;
	gap: 4px;
	margin-left: auto;
`;

const TabBar = styled.div`
	display: flex;
	align-items: flex-end;
	height: 20px;
	padding-left: 4px;
	background: #a0a0a0;
`;

const RibbonTab = styled.button`
	height: 18px;
	padding: 0 ${props => props.$active ? 9 : 10}px;
	border-radius: 2px 2px 0 0;
	background: ${props => props.$active ? 'linear-gradient(#dcdcdc, #fff)' : 'none'};
	line-height: 19px;
	color: #1e1216;

	&:first-child {
		margin-right: 1px;
	}
`;

const MinimizeButton = styled(PlainButton)`
	align-self: center;
	gap: 4px;
	margin-left: 25px;
`;

const Ribbon = styled.div`
	display: flex;
	height: 98px;
	padding-left: 3px;
	border-top: 1px solid #fff;
	background: linear-gradient(#e6e6e6, #a9a9a9);
`;

const Panel = styled.section`
	display: flex;
	flex-direction: column;
	flex: none;
	width: ${props => props.$width}px;
	border-right: 1px solid #999;
	background: #fdfdfd;
`;

const PanelBody = styled.div`
	display: flex;
	height: 79px;
`;

const PanelTitle = styled.button`
	display: flex;
	align-items: center;
	justify-content: center;
	gap: 6px;
	position: relative;
	height: 18px;
	padding-right: ${props => props.$launcher ? 12 : 0}px;
	border-top: 1px solid #dadada;
	background: #efefef;
	line-height: 17px;
	color: #333;
`;

const Launcher = styled.svg`
	position: absolute;
	right: 4px;
	bottom: 5px;
	width: 6px;
	height: 6px;
	fill: none;
	stroke: #333;
`;

const BigButtonRoot = styled.button`
	display: flex;
	flex-direction: column;
	align-items: center;
	flex: none;
	width: ${props => props.$width}px;
	padding-top: 7px;
`;

const BigLabel = styled.span`
	margin: 5px 0 4px;
	line-height: 17px;
	white-space: pre;
	color: #333;
`;

const BigA = styled.span`
	height: 30px;
	font-family: 'Liberation Sans', sans-serif;
	font-size: 38px;
	font-weight: 700;
	line-height: 34px;
	color: #444;
`;

const BigButton = ({ icon, label, width = 40, caret }) => (
	<BigButtonRoot $width={width}>
		{icon === 'text' ? <BigA>A</BigA> : <BigIcon name={icon} />}
		<BigLabel>{label}</BigLabel>
		{caret && <Caret size={5} />}
	</BigButtonRoot>
);

const Column = styled.div`
	display: grid;
	grid-template-rows: repeat(3, 24px);
	align-content: start;
	align-items: center;
	flex: none;
	width: ${props => props.$width}px;
	margin-left: ${props => props.$gap || 0}px;
	padding-top: 4px;
`;

const SmallButtonRoot = styled.button`
	display: flex;
	align-items: center;
	gap: 5px;
	color: #333;

	${CaretSvg} {
		margin-left: auto;
	}
`;

const SmallButton = ({ icon, label, caret }) => (
	<SmallButtonRoot aria-label={label || icon}>
		<Icon name={icon} />
		{label}
		{caret && <Caret size={5} />}
	</SmallButtonRoot>
);

const ToolButton = styled.button`
	display: flex;
	align-items: center;
	justify-content: center;
	width: 24px;
	height: 22px;
	border: ${props => props.$active ? '1px solid #2c628b' : '0'};
	background: ${props => props.$active ? '#a9d5f5' : 'none'};
`;

const LayerGrid = styled.div`
	display: grid;
	grid-template-rows: repeat(3, 24px);
	align-content: start;
	align-items: center;
	width: 209px;
	padding-top: 4px;
`;

const LayerRow = styled.div`
	display: flex;
	align-items: center;

	${SmallButtonRoot} {
		margin-left: 4px;
	}
`;

const PropertyGrid = styled.div`
	display: grid;
	grid-template: repeat(3, 24px) / 19px 181px;
	align-items: center;
	align-content: start;
	padding: 4px 0 0 2px;
	width: 202px;
`;

const Combo = styled.label`
	display: flex;
	align-items: center;
	gap: 3px;
	height: 22px;
	padding: 0 3px 0 4px;
	border: 1px solid #c9cbcf;
	background: linear-gradient(#fafafa, #ececee);
	color: #222;

	select {
		flex: 1;
	}
`;

const Swatch = styled.span`
	width: 15px;
	height: 15px;
	margin: 0 ${props => props.$after || 1}px 0 ${props => props.$indent || 0}px;
	background: ${props => props.$color};
`;

const LineSample = styled.span`
	width: 59px;
	height: 1px;
	margin-left: 4px;
	background: #111;
`;

const Main = styled.main`
	display: flex;
	flex: 1;
	margin-top: 4px;
	background: #efefef;
	box-shadow: 0 -4px #efefef;
	border-bottom: 1px solid #999;
`;

const Palette = styled.aside`
	width: 78px;
`;

const PaletteTitle = styled.div`
	display: flex;
	align-items: center;
	gap: 6px;
	height: 22px;
	margin-top: 2px;
	padding-left: 6px;
	background: #e9e9e9;
`;

const Grip = styled.span`
	width: 3px;
	height: 11px;
	background: repeating-linear-gradient(#aaa 0 1px, transparent 1px 2px);
`;

const PaletteList = styled.div`
	display: grid;
	grid-auto-rows: 18px;
	padding-top: 7px;
`;

const PaletteItem = styled.button`
	display: flex;
	align-items: center;
	padding: 0 2px 0 8px;
	color: #111;

	svg {
		width: 5px;
		height: 10px;
		margin-right: 15px;
		fill: #23507f;
	}
`;

const PaletteLabel = styled.span`
	display: flex;
	flex: 1;
	justify-content: space-between;
`;

const Toolbar = styled.div`
	width: ${props => props.$width}px;
	border: 1px solid #777;
	background: #f0f0f0;

	&::before {
		content: '';
		display: block;
		height: 7px;
		background: repeating-linear-gradient(90deg, #ddd 0 1px, #777 1px 2px) center / 14px 4px no-repeat #8c8c8c;
	}
`;

const ToolbarButton = styled.button`
	display: flex;
	align-items: center;
	justify-content: center;
	width: 100%;
	height: 22px;
	font-family: 'Liberation Sans', sans-serif;
	font-size: 18px;
	font-weight: 700;
	color: #fff;
`;

const ToolbarDivider = styled.hr`
	margin: 1px 3px 3px;
	border: 0;
	border-top: 1px solid #aaa;
`;

const LeftTools = styled.div`
	width: 29px;
`;

const RightTools = styled.div`
	display: flex;
	flex-direction: column;
	gap: 1px;
	width: 32px;
	padding-left: 4px;
`;

const Workspace = styled.div`
	display: flex;
	flex: 1;
	flex-direction: column;
	border-top: 1px solid #777;
`;

const FileTabs = styled.div`
	display: flex;
	align-items: stretch;
	height: 18px;
	gap: 2px;
	background: #efeeec;
`;

const FileTab = styled.button`
	padding: 0 8px;
	border-left: 1px solid ${props => props.$active ? '#623' : '#fff'};
	border-right: 1px solid ${props => props.$active ? '#efeeec' : '#444'};
	border-bottom: 1px solid ${props => props.$active ? '#fbe9ea' : '#444'};
	background: ${props => props.$active ? '#fbe9ea' : '#fff'};
	line-height: 17px;
	color: ${props => props.$active ? '#2419d2' : '#111'};
`;

const Mono = styled.span`
	font-family: 'Liberation Mono', monospace;
	font-size: 10px;
`;

const Canvas = styled.div`
	position: relative;
	flex: 1;
	background: #fdfdfd;
`;

const ViewLabel = styled.div`
	padding: 5px 3px;
	line-height: 17px;
	color: #111;
`;

const DrawnLine = styled.div`
	position: absolute;
	top: 405px;
	left: 483px;
	right: 194px;
	height: 1px;
	background: #14147c;
`;

const Ucs = styled.svg`
	position: absolute;
	left: 8px;
	bottom: 0;
	width: 80px;
	height: 90px;
	fill: none;
	stroke: #222;

	text {
		stroke: none;
		fill: #222;
		font-family: Lato, sans-serif;
		font-weight: 300;
		font-size: 19px;
	}
`;

const ViewCube = styled.div`
	position: absolute;
	top: 15px;
	right: 11px;
	display: grid;
	grid-template: 34px 46px 36px 18px 16px / 26px 1fr 26px;
	place-items: center;
	gap: 0 13px;
	color: #a8a8a8;
	font-size: 16px;
`;

const CubeSide = styled.button`
	grid-area: ${props => props.$area};
	align-self: ${props => props.$align || 'center'};
	line-height: 18px;
	font-weight: 500;
	color: #fdfdfd;
	-webkit-text-stroke: .8px #a4a4a4;
`;

const CubeTop = styled.button`
	grid-area: 2 / 2;
	width: 46px;
	height: 46px;
	border: 1px solid #a3a9a3;
	border-radius: 2px;
	background: linear-gradient(#e3e5ea, #e3e5ea) center / 28px 28px no-repeat #f3f4f4;
	font-size: 20px;
	line-height: 42px;
	color: #8f9398;
`;

const Wcs = styled.button`
	grid-area: 5 / 2;
	display: flex;
	align-items: center;
	justify-content: center;
	gap: 6px;
	width: 46px;
	height: 16px;
	border-radius: 4px;
	background: #ecebf4;
	font-family: 'Liberation Sans', sans-serif;
	font-size: 11px;
	color: #999;

	svg {
		width: 9px;
		height: 5px;
		fill: none;
		stroke: #b4b4b4;
	}
`;

const NavBar = styled.svg`
	position: absolute;
	top: 189px;
	right: 2px;
	width: 36px;
	height: 216px;
	fill: none;
	stroke: #d8d8d8;
`;

const CommandArea = styled.form`
	position: absolute;
	left: 325px;
	right: 324px;
	bottom: 0;
`;

const HistoryLine = styled.div`
	width: max-content;
	height: 15px;
	margin: 0 0 1px 57px;
	padding: 0 2px;
	border-radius: 2px;
	background: #777;
	font-family: 'DejaVu Sans Mono', 'Noto Sans CJK SC', monospace;
	line-height: 15px;
	color: #fff;

	& + & {
		margin-bottom: 0;
	}
`;

const CommandLine = styled.div`
	display: flex;
	align-items: center;
	height: 26px;
	border: 1px solid #5e5e5e;
	border-radius: 3px;
	background: #4b4b4b;
	overflow: hidden;
`;

const CommandHandle = styled.div`
	display: flex;
	align-items: center;
	gap: 8px;
	width: 53px;
	height: 100%;
	padding-left: 2px;
	background: linear-gradient(#a9a9a9, #7e7e7e);

	svg + svg + svg {
		margin-left: 4px;
	}
`;

const CommandInput = styled.input`
	flex: 1;
	margin-left: 6px;
	color: #eee;

	&::placeholder {
		color: #bcbcbc;
	}
`;

const LayoutTabs = styled.div`
	display: flex;
	height: 20px;
	padding-left: 12px;
	gap: 2px;
`;

const LayoutTab = styled.button`
	height: 18px;
	padding: 0 ${props => props.$small ? 7 : 11}px;
	border-radius: 0 0 6px 6px;
	background: ${props => props.$active ? '#fdfdfd' : '#dcdddd'};
	font-weight: ${props => props.$active ? 700 : 400};
	line-height: 17px;
	color: ${props => props.$active ? '#111' : '#777'};
`;

const StatusBar = styled.footer`
	display: flex;
	align-items: center;
	height: 26px;
	margin-left: 218px;
	background: #e6e6e6;
	white-space: nowrap;
	color: #111;
`;

const StatusCell = styled.button`
	display: flex;
	align-items: center;
	justify-content: center;
	flex: none;
	width: ${props => props.$width}px;
	height: 26px;
	font-weight: ${props => props.$bold ? 700 : 400};
`;

const StatusSelect = styled.label`
	display: flex;
	align-items: center;
	justify-content: ${props => props.$spread ? 'space-between' : 'flex-start'};
	gap: 4px;
	flex: none;
	width: ${props => props.$width}px;
	padding: 0 ${props => props.$pad}px;
	font-weight: ${props => props.$bold ? 700 : 400};
`;

const Coordinates = styled.output`
	flex: none;
	width: 145px;
	padding-right: 8px;
	text-align: right;
`;

const StatusEnd = styled.div`
	display: flex;
	margin-left: auto;
	padding-right: 1px;
`;

const Cursor = styled.svg`
	position: fixed;
	right: 148px;
	bottom: 12px;
	width: 12px;
	height: 20px;
`;

const menus = ['文件(F)', '编辑(E)', '视图(V)', '插入(I)', '格式(O)', '工具(T)', '绘图(D)', '标注(N)', '修改(M)', '参数(P)', '窗口(W)', '帮助(H)', 'Express'];

const ribbonTabs = ['默认', '插入', '注释', '参数化', '视图', '管理', '输出', '附加模块', 'A360', '天正建筑', 'Express Tools'];

const paletteItems = ['设置', '轴网柱子', '墙体', '门窗', '房间屋顶', '楼梯其他', '立面', '剖面', '文字表格', '尺寸标注', '符号标注', '图层控制', '工具', '图块图案', '建筑防火', '场地布置', '三维建模', '文件布图', '其它', '数据中心', '帮助演示'];

const drawTools = ['tLine', 'tXline', 'tPline', 'tPolygon', 'tRect', 'tArc', 'tCircle', 'tCloud', 'tSpline', 'tEllipse', 'tEllArc', 'tInsert', 'tBlock', 'tPoint', 'tHatch', 'tGradient', 'tRegion', 'table', 'A', 'tDots'];

const modifyTools = ['eraser', 'rCopy', 'rMirror', 'rOffset', 'rArray', 'rMove', 'rRotate', 'rScale', 'stretch', 'rTrim', 'rExtend', 'rBreakAt', 'rBreak', 'rJoin', 'rChamfer', 'rFillet', 'rBlend', 'rExplode'];

const statusLeft = [
	['sGrid', 24], ['sSnap', 22], ['caret', 20], ['sInfer', 24], ['sDyn', 26], ['sOrtho', 26], ['sPolar', 20], ['caret', 18],
	['sIso', 22], ['caret', 16], ['sTrack', 24], ['sOsnap', 24], ['caret', 16], ['sWeight', 26], ['sTransp', 24], ['sCycle', 26],
	['sOsnap3', 24], ['caret', 16], ['sUcs', 26], ['sBox', 24], ['caret', 16], ['sGizmo', 22], ['caret', 18], ['sAnnoVis', 26],
	['sAnnoAuto', 22], ['sAnno', 24],
];

const statusMiddle = [['sGear', 28], ['caret', 14], ['sPlus', 26], ['sRuler', 26]];

const statusRight = [
	['sProps', 28], ['sLockUi', 24], ['caret', 16], ['sIsolate', 24], ['sHardware', 24], ['sLines', 26], ['sFill', 24],
	['sGrayLines', 24], ['sGrayLines2', 24], ['sBall', 26], ['sDwg', 26], ['sLayerWarn', 26], ['sClean', 28], ['sMenu', 24],
];

const StatusIcons = ({ items }) => items.map(([name, width], i) => (
	<StatusCell key={i} $width={width} aria-label={name}>
		{name === 'caret' ? <Caret size={8} color="#111" /> : <Icon name={name} />}
	</StatusCell>
));

const RibbonPanel = ({ title, width, caret = true, launcher, children }) => (
	<Panel $width={width}>
		<PanelBody>{children}</PanelBody>
		<PanelTitle $launcher={launcher}>
			{title}
			{caret && <Caret size={8} />}
			{launcher && <Launcher viewBox="0 0 6 6"><path d="M0 0l5 5M5.500 1v4.500H1" /></Launcher>}
		</PanelTitle>
	</Panel>
);

const AppHeader = () => (
	<Header>
		<TitleBar>
			<QuickBar>
				{['newFile', 'open', 'save', 'saveAs', 'print'].map(name => (
					<PlainButton key={name} aria-label={name}><Icon name={name} /></PlainButton>
				))}
				<PlainButton aria-label="undo"><Icon name="undo" /></PlainButton>
				<Caret size={5} />
				<PlainButton aria-label="redo"><Icon name="redo" /></PlainButton>
				<Caret size={5} />
				<svg width="8" height="8"><path d="M0 .5h8" stroke="#333" /><path d="M0 3h8L4 7z" fill="#333" /></svg>
			</QuickBar>
			<Title>
				<span>T20天正建筑软件 V4.0 For Autodesk AutoCAD 2016</span>
				<span>CAD2020一直用速成样板文件.dwg</span>
			</Title>
			<InfoCenter>
				<SearchToggle aria-label="toggle search">
					<svg width="5" height="8" viewBox="0 0 5 8"><path d="M0 0l5 4-5 4z" fill="#333" /></svg>
				</SearchToggle>
				<SearchInput placeholder="键入关键字或短语" aria-label="search" />
				<PlainButton aria-label="find"><Icon name="binoculars" /></PlainButton>
				<PlainButton>
					<Icon name="user" />
					378077684@...
					<Caret size={5} />
				</PlainButton>
				<PlainButton aria-label="exchange"><Icon name="exchange" /></PlainButton>
				<PlainButton aria-label="a360"><Icon name="a360" /><Caret size={5} /></PlainButton>
				<InfoDivider />
				<PlainButton aria-label="help"><HelpBadge>?</HelpBadge></PlainButton>
				<Caret size={5} />
			</InfoCenter>
			<WindowButtons>
				<WindowButton aria-label="minimize">
					<svg width="12" height="6"><path d="M.5 1.500h11v3H.5z" fill="#fff" stroke="#555" /></svg>
				</WindowButton>
				<WindowButton aria-label="maximize">
					<svg width="12" height="10"><path d="M.5.500h11v9H.5zM4 4h4v3H4z" fill="#fff" stroke="#555" /></svg>
				</WindowButton>
				<WindowButton $wide aria-label="close">
					<svg width="12" height="10"><path d="M.5.500h3L6 3 8.500.500h3L8 5l3.500 4.500h-3L6 7 3.500 9.500h-3L4 5z" fill="#fff" stroke="#555" /></svg>
				</WindowButton>
				<CaptureStrip />
			</WindowButtons>
		</TitleBar>
		<AppButton aria-label="application menu">
			<svg width="24" height="26" viewBox="0 0 24 26">
				<path d="M12 1L1 22l6 3 5-9 5 9 6-3z" fill="#b5480f" />
				<path d="M12 1L1 22l6 3 3-8 2-9z" fill="#d06418" />
				<path d="M9 8l3-7 3 7-3 7z" fill="#8f3a0c" />
				<path d="M6 17h12l-2 3-4-3-4 3z" fill="#d8843a" />
			</svg>
			<Caret size={7} />
		</AppButton>
		<MenuBar>
			{menus.map(item => <button key={item}>{item}</button>)}
			<DocButtons>
				<PlainButton aria-label="minimize drawing"><svg width="12" height="12"><path d="M1 9h10" stroke="#111" strokeWidth="2" /></svg></PlainButton>
				<PlainButton aria-label="restore drawing"><svg width="14" height="12" fill="none" stroke="#111"><path d="M5 3.500v-2h8v6H9M1.500 4.500h7v6h-7z" strokeWidth="1.500" /></svg></PlainButton>
				<PlainButton aria-label="close drawing"><svg width="10" height="12"><path d="M1 2l8 8M9 2l-8 8" stroke="#111" strokeWidth="2.400" /></svg></PlainButton>
			</DocButtons>
		</MenuBar>
	</Header>
);

const AppRibbon = () => (
	<>
		<TabBar>
			{ribbonTabs.map((tab, i) => <RibbonTab key={tab} $active={i === 0}>{tab}</RibbonTab>)}
			<MinimizeButton aria-label="minimize ribbon">
				<svg width="15" height="9"><rect x=".5" y=".5" width="14" height="8" rx="2" fill="#f5f5f5" stroke="#444" /><path d="M5 6l2.500-3L10 6z" fill="#222" /></svg>
				<Caret size={6} />
			</MinimizeButton>
		</TabBar>
		<Ribbon>
			<RibbonPanel title="绘图" width={209}>
				<BigButton icon="line" label="直线" />
				<BigButton icon="pline" label="多段线" />
				<BigButton icon="circle" label="圆" caret />
				<BigButton icon="arc" label="圆弧" width={44} caret />
				<Column $width={28} $gap={6}>
					<SmallButton icon="rect" caret />
					<SmallButton icon="ellipse" caret />
					<SmallButton icon="hatch" caret />
				</Column>
			</RibbonPanel>
			<RibbonPanel title="修改" width={227}>
				<Column $width={45} $gap={7}>
					<SmallButton icon="move" label="移动" />
					<SmallButton icon="copy" label="复制" />
					<SmallButton icon="stretch" label="拉伸" />
				</Column>
				<Column $width={45} $gap={14}>
					<SmallButton icon="rotate" label="旋转" />
					<SmallButton icon="mirror" label="镜像" />
					<SmallButton icon="scale" label="缩放" />
				</Column>
				<Column $width={62} $gap={14}>
					<SmallButton icon="trim" label="修剪" caret />
					<SmallButton icon="fillet" label="圆角" caret />
					<SmallButton icon="array" label="阵列" caret />
				</Column>
				<Column $width={16} $gap={13}>
					<SmallButton icon="eraser" />
					<SmallButton icon="explode" />
					<SmallButton icon="offset" />
				</Column>
			</RibbonPanel>
			<RibbonPanel title="注释" width={156}>
				<BigButton icon="text" label="文字" width={48} caret />
				<BigButton icon="dim" label="标注" width={36} />
				<Column $width={58} $gap={7}>
					<SmallButton icon="linear" label="线性" caret />
					<SmallButton icon="leader" label="引线" caret />
					<SmallButton icon="table" label="表格" />
				</Column>
			</RibbonPanel>
			<RibbonPanel title="图层" width={252}>
				<BigButton icon="layerProps" label={'图层\n特性'} />
				<LayerGrid>
					<Combo>
						<Icon name="bulb" />
						<Icon name="sun" />
						<Icon name="unlock" />
						<Swatch $color="#05050d" $indent={2} />
						<select aria-label="layer"><option>E-造型中</option></select>
						<Caret size={8} />
					</Combo>
					<LayerRow>
						{['layOff', 'layIso', 'layFreeze', 'layLock'].map(name => (
							<ToolButton key={name} aria-label={name}><Icon name={name} /></ToolButton>
						))}
						<SmallButton icon="layCurrent" label="置为当前" />
					</LayerRow>
					<LayerRow>
						{['layOn', 'layUniso', 'layThaw', 'layUnlock'].map(name => (
							<ToolButton key={name} aria-label={name}><Icon name={name} /></ToolButton>
						))}
						<SmallButton icon="layMatch" label="匹配图层" />
					</LayerRow>
				</LayerGrid>
			</RibbonPanel>
			<RibbonPanel title="块" width={134}>
				<BigButton icon="insert" label="插入" caret />
				<Column $width={81} $gap={5}>
					<SmallButton icon="block" label="创建" />
					<SmallButton icon="blockEdit" label="编辑" />
					<SmallButton icon="attr" label="编辑属性" caret />
				</Column>
			</RibbonPanel>
			<RibbonPanel title="特性" width={243} launcher>
				<BigButton icon="matchProps" label={'特性\n匹配'} />
				<PropertyGrid>
					<Icon name="wheel" />
					<Combo>
						<Swatch $color="#1a1aff" $indent={8} $after={7} />
						<select aria-label="colour"><option>蓝</option></select>
						<Caret size={8} />
					</Combo>
					<Icon name="weights" />
					<Combo>
						<LineSample />
						<select aria-label="lineweight"><option>ByLayer</option></select>
						<Caret size={8} />
					</Combo>
					<Icon name="dashes" />
					<Combo>
						<LineSample />
						<select aria-label="linetype"><option>ByLayer</option></select>
						<Caret size={8} />
					</Combo>
				</PropertyGrid>
			</RibbonPanel>
			<RibbonPanel title="组" width={69}>
				<BigButton icon="group" label="组" width={42} />
				<Column $width={24}>
					<ToolButton aria-label="ungroup"><Icon name="ungroup" /></ToolButton>
					<ToolButton aria-label="edit group"><Icon name="groupEdit" /></ToolButton>
					<ToolButton $active aria-label="group selection"><Icon name="groupSelect" /></ToolButton>
				</Column>
			</RibbonPanel>
			<RibbonPanel title="实用工具" width={76}>
				<BigButton icon="measure" label="测量" width={48} caret />
				<Column $width={24}>
					<ToolButton aria-label="quick select"><Icon name="quickCalc" /></ToolButton>
					<ToolButton aria-label="point style"><Icon name="point" /></ToolButton>
					<ToolButton aria-label="calculator"><Icon name="calc" /></ToolButton>
				</Column>
			</RibbonPanel>
			<RibbonPanel title="剪贴板" width={76} caret={false}>
				<BigButton icon="paste" label="粘贴" width={48} caret />
				<Column $width={24}>
					<ToolButton aria-label="cut"><Icon name="cut" /></ToolButton>
					<ToolButton aria-label="copy clip"><Icon name="pages" /></ToolButton>
				</Column>
			</RibbonPanel>
			<RibbonPanel title="视图" width={60} launcher>
				<BigButton icon="base" label="基点" width={59} caret />
			</RibbonPanel>
		</Ribbon>
	</>
);

const NavigationBar = () => (
	<NavBar viewBox="0 0 36 216">
		<rect x="1.500" y="1.500" width="33" height="213" rx="4" fill="#f6f6f6" stroke="#c6c6c6" strokeWidth="2" />
		<circle cx="28" cy="7" r="3" />
		<circle cx="28" cy="208" r="3" />
		<circle cx="18" cy="32" r="11" />
		<circle cx="18" cy="32" r="6" />
		<path d="M16 51h4l-2 2zM16 121h4l-2 2zM16 159h4l-2 2z" fill="#d0d0d0" />
		<path d="M5 58.500h26M5 166.500h26" />
		<path d="M12 84c-3-4-6-7-5-9s4 1 5 3l-2-10c0-2 2-2 3 0l2 7V64c0-2 3-2 3 0v11l2-9c1-2 3-1 3 1l-1 9 3-5c1-1 3 0 2 2-2 6-3 10-6 12z" />
		<path d="M7 93l16 16M22 93L7 109M7 98v-5h5M17 93h5v5M7 104v5h5" />
		<circle cx="22" cy="107" r="5" />
		<path d="M26 111l4 4" strokeWidth="2" />
		<path d="M16 132h4v22h-4zM18 128l3 4h-6z" />
		<ellipse cx="18" cy="143" rx="11" ry="4" />
		<path d="M6 172h6v5H6zM15 172h6v5h-6zM24 172h6v5h-6zM6.500 181h15v13h-15z" />
		<path d="M12 184l5 3-5 4z" fill="#c8c8c8" />
	</NavBar>
);

const Drawing = () => (
	<Canvas>
		<ViewLabel>[−][俯视][二维线框]</ViewLabel>
		<DrawnLine />
		<ViewCube>
			<CubeSide $area="1 / 2" $align="start">北</CubeSide>
			<CubeSide $area="2 / 1">西</CubeSide>
			<CubeTop>上</CubeTop>
			<CubeSide $area="2 / 3">东</CubeSide>
			<CubeSide $area="3 / 2" $align="end">南</CubeSide>
			<Wcs>WCS<svg viewBox="0 0 9 5"><path d="M.5.500h8l-4 4z" /></svg></Wcs>
		</ViewCube>
		<NavigationBar />
		<Ucs viewBox="0 0 80 90">
			<path d="M8.500 23v50M8.500 73.500h50M4.500 68.500h9v9h-9z" />
			<text x="11" y="19">Y</text>
			<text x="63" y="73">X</text>
		</Ucs>
		<CommandArea>
			<HistoryLine>命令: E</HistoryLine>
			<HistoryLine>ERASE 找到 1 个</HistoryLine>
			<CommandLine>
				<CommandHandle>
					<svg width="5" height="17"><path d="M1 0v17M4 0v17" stroke="#eee" strokeDasharray="1 1" strokeWidth="2" /></svg>
					<svg width="10" height="10"><path d="M1 1l8 8M9 1L1 9" stroke="#fff" strokeWidth="2" /></svg>
					<svg width="14" height="14" fill="none"><path d="M6 6l6.500 6.500" stroke="#fff" strokeWidth="2.600" /><path d="M2 1l2.500 2.500L3.500 5 1 3.500C1 7 5 8 7 6s1-5-2-5" stroke="#fff" strokeWidth="1.400" /></svg>
				</CommandHandle>
				<svg width="24" height="14">
					<rect x="5" width="15" height="13" rx="1" fill="#e8e8e8" />
					<path d="M8 3l4 3.500L8 10M13 10.500h5" fill="none" stroke="#444" />
				</svg>
				<Caret size={6} color="#aaa" />
				<CommandInput placeholder="键入命令" aria-label="command" />
				<svg width="12" height="4"><path d="M2 4l3-3 3 3z" fill="#777" /></svg>
			</CommandLine>
		</CommandArea>
	</Canvas>
);

const HiddenDefs = styled.svg`
	position: absolute;
	width: 0;
	height: 0;
`;

const App = () => (
	<Window>
		<GlobalStyle />
		<HiddenDefs>
			<linearGradient id="shade" x1="0" y1="0" x2="1" y2="1">
				<stop offset="0" stopColor="#fff" />
				<stop offset="1" stopColor="#c6c8d0" />
			</linearGradient>
		</HiddenDefs>
		<AppHeader />
		<AppRibbon />
		<Main>
			<Palette>
				<PaletteTitle><Grip />T...</PaletteTitle>
				<PaletteList>
					{paletteItems.map(item => (
						<PaletteItem key={item}>
							<svg viewBox="0 0 5 10"><path d="M0 0l5 5-5 5z" /></svg>
							<PaletteLabel>{[...item].map((char, i) => <span key={i}>{char}</span>)}</PaletteLabel>
						</PaletteItem>
					))}
				</PaletteList>
			</Palette>
			<LeftTools>
				<Toolbar $width={24}>
					{drawTools.map(name => (
						<ToolbarButton key={name} aria-label={name}>{name === 'A' ? 'A' : <Icon name={name} />}</ToolbarButton>
					))}
				</Toolbar>
			</LeftTools>
			<Workspace>
				<FileTabs>
					<FileTab $active><Mono>CAD2020</Mono>一直用速成样板文件</FileTab>
					<FileTab>月子会所餐厅</FileTab>
				</FileTabs>
				<Drawing />
			</Workspace>
			<RightTools>
				<Toolbar $width={24}>
					{modifyTools.map(name => (
						<ToolbarButton key={name} aria-label={name}><Icon name={name} /></ToolbarButton>
					))}
				</Toolbar>
				<Toolbar $width={24}>
					{['oFront', 'oBack', 'oAbove', 'oUnder'].map(name => (
						<ToolbarButton key={name} aria-label={name}><Icon name={name} /></ToolbarButton>
					))}
					<ToolbarDivider />
					<ToolbarButton aria-label="text order"><Icon name="oText" /></ToolbarButton>
					<ToolbarButton aria-label="hatch order"><Icon name="oHatch" /></ToolbarButton>
				</Toolbar>
			</RightTools>
		</Main>
		<LayoutTabs>
			<LayoutTab $active>模型</LayoutTab>
			<LayoutTab>布局1</LayoutTab>
			<LayoutTab $small aria-label="new layout">
				<svg width="10" height="10"><path d="M5 1v8M1 5h8" stroke="#444" strokeWidth="2" /></svg>
			</LayoutTab>
		</LayoutTabs>
		<StatusBar>
			<StatusSelect $width={74} $pad={2}>
				<select aria-label="scale"><option>比例 1:100</option></select>
				<Caret size={8} color="#111" />
			</StatusSelect>
			<Coordinates>32620, 49894, 0</Coordinates>
			<StatusCell $width={30} $bold>模型</StatusCell>
			<StatusIcons items={statusLeft} />
			<StatusSelect $width={80} $pad={6}>
				<select aria-label="annotation scale"><option>1:1 / 100%</option></select>
				<Caret size={8} color="#111" />
			</StatusSelect>
			<StatusIcons items={statusMiddle} />
			<StatusSelect $width={72} $pad={4} $bold $spread>
				<select aria-label="units"><option>小数</option></select>
				<Caret size={8} color="#111" />
			</StatusSelect>
			<StatusEnd><StatusIcons items={statusRight} /></StatusEnd>
		</StatusBar>
		<Cursor viewBox="0 0 12 20">
			<path d="M.5.500v15.500l3.500-3.300 2.600 6 2.600-1.200-2.600-5.700h4.900z" fill="#fff" stroke="#111" />
		</Cursor>
	</Window>
);

export default App;
